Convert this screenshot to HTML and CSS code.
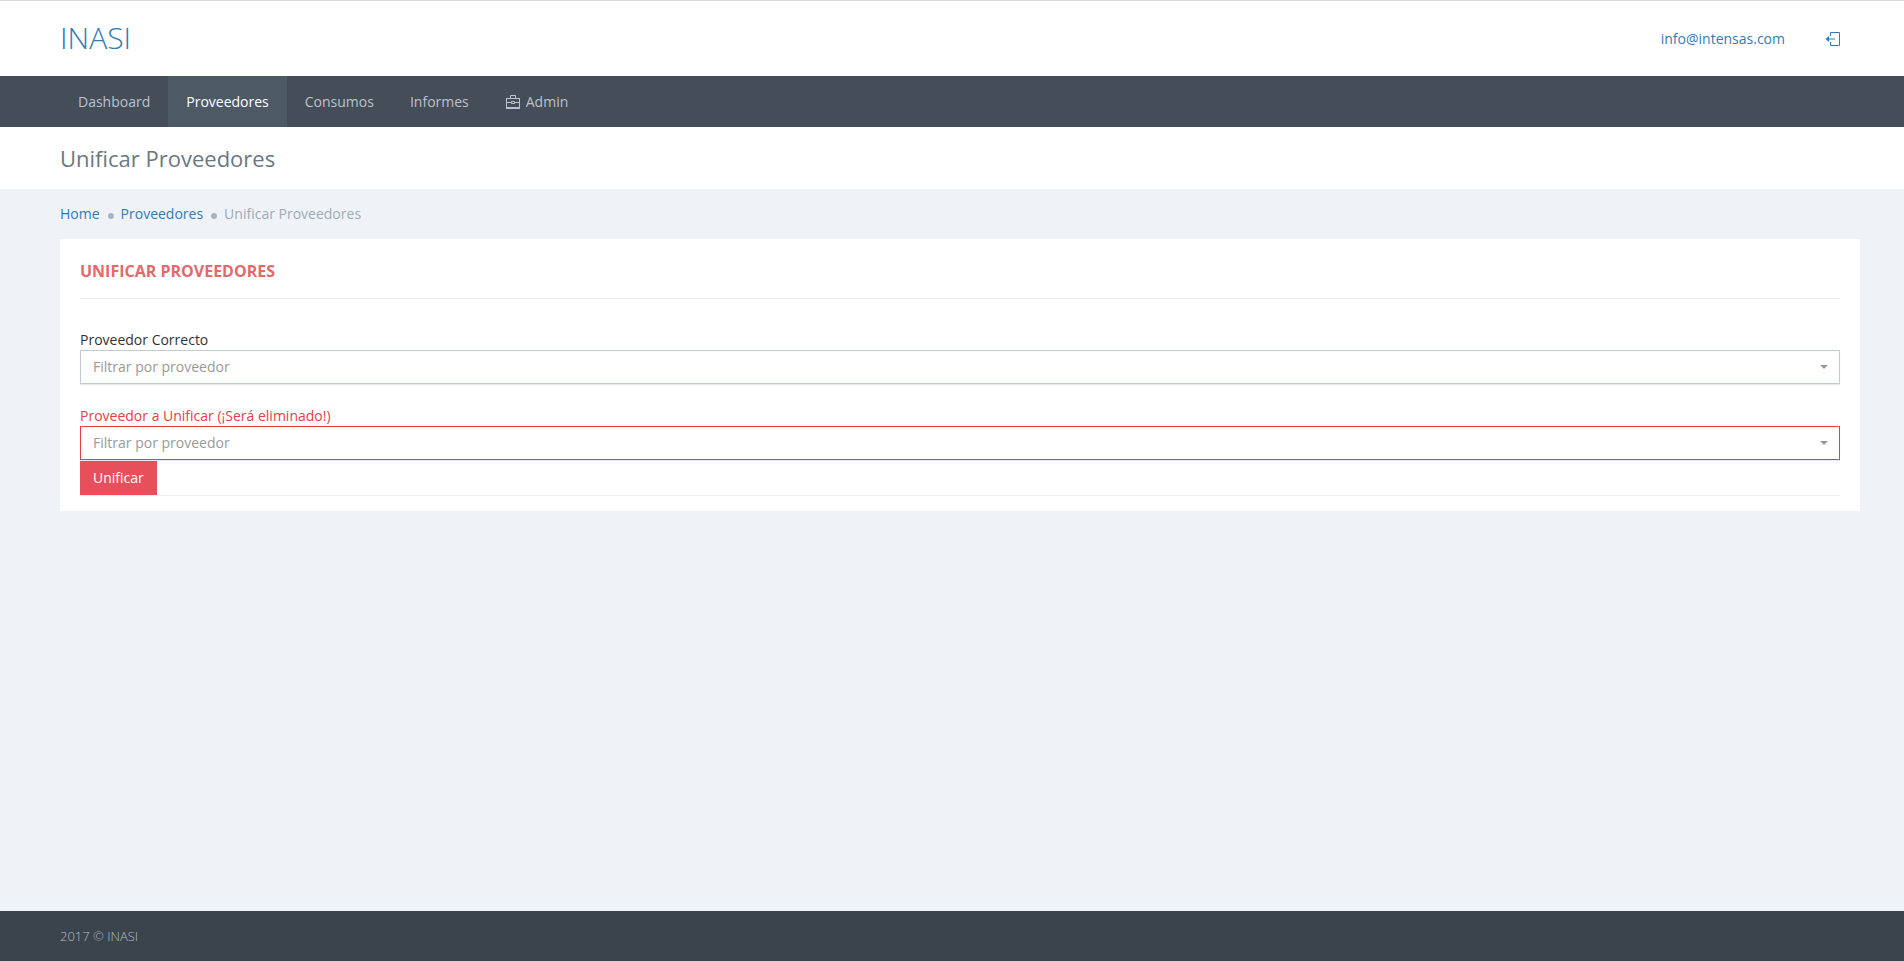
FILE: index.html
```html
<!DOCTYPE html>
<html lang="es">
<head>
<meta charset="utf-8">
<title>Unificar Proveedores</title>
<meta name="viewport" content="width=device-width, initial-scale=1">
<link rel="stylesheet" href="styles.css">
</head>
<body>
<header class="top">
  <a class="logo" href="#">INASI</a>
  <div class="user">
    <a href="#">info@intensas.com</a>
    <a class="logout" href="#" aria-label="Salir">
      <svg width="16" height="16" viewBox="0 0 16 16" fill="none" stroke="currentColor"><path d="M5.500 5V1.500H14.500V14.500H5.500V11M3 8H10"/><path d="M0.500 8L4 5V11Z" fill="currentColor" stroke="none"/></svg>
    </a>
  </div>
</header>
<nav class="menu">
  <a href="#">Dashboard</a>
  <a class="active" href="#">Proveedores</a>
  <a href="#">Consumos</a>
  <a href="#">Informes</a>
  <a href="#"><svg width="16" height="16" viewBox="0 0 16 16" fill="none" stroke="currentColor"><path d="M1 4.500H15M1.500 4V14M14.500 4V14M5.500 4.500V1.500H10.500V4.500M1.500 8.500H6.500M9.500 8.500H14.500M6.500 7.500H9.500V9.500H6.500Z"/><path d="M1 14H15" stroke-width="2"/></svg>Admin</a>
</nav>
<div class="page-head"><h1>Unificar Proveedores</h1></div>
<main class="content">
  <ol class="crumbs">
    <li><a href="#">Home</a></li>
    <li><a href="#">Proveedores</a></li>
    <li>Unificar Proveedores</li>
  </ol>
  <section class="card">
    <h2>Unificar Proveedores</h2>
    <form>
      <div class="field">
        <label for="correcto">Proveedor Correcto</label>
        <div class="picker"><select id="correcto"><option>Filtrar por proveedor</option></select></div>
      </div>
      <div class="field error">
        <label for="unificar">Proveedor a Unificar (¡Será eliminado!)</label>
        <div class="picker"><select id="unificar"><option>Filtrar por proveedor</option></select></div>
      </div>
      <div class="actions"><button type="button">Unificar</button></div>
    </form>
  </section>
</main>
<footer class="footer">2017 © INASI</footer>
</body>
</html>
```
FILE: styles.css
```css
* { box-sizing: border-box; }
body {
  margin: 0;
  min-height: 100vh;
  display: flex;
  flex-direction: column;
  background: #eff3f8;
  color: #333;
  font: 400 14px/20px "Open Sans", sans-serif;
}
a { color: #337ab7; text-decoration: none; }
h1, h2, ol { margin: 0; padding: 0; }

.top {
  display: flex;
  align-items: center;
  justify-content: space-between;
  height: 76px;
  padding: 0 63px 0 60px;
  background: #fff;
  border-top: 1px solid #d9d9d9;
}
.logo { padding-bottom: 2px; font-size: 30px; line-height: 40px; font-weight: 300; }
.user { display: flex; align-items: center; gap: 40px; }
.logout { display: flex; }

.menu {
  display: flex;
  padding: 0 44px 0 60px;
  background: #444d58;
}
.menu a {
  display: flex;
  align-items: center;
  gap: 5px;
  height: 51px;
  padding: 0 18px;
  color: #bcc2cb;
}
.menu .active { background: #4e5966; color: #fff; }

.page-head { padding: 16px 60px; background: #fff; }
.page-head h1 { color: #697882; font-size: 22px; line-height: 30px; font-weight: 400; }

.content { flex: 1; padding: 15px 44px 15px 60px; }
.crumbs { display: flex; list-style: none; color: #9eacb4; margin-bottom: 15px; }
.crumbs li { display: flex; align-items: center; }
.crumbs li + li::before {
  content: "";
  width: 6px;
  height: 6px;
  margin: 4px 7px 0 8px;
  border-radius: 50%;
  background: #a7b5c5;
}

.card { padding: 12px 20px 15px; background: #fff; }
.card h2 {
  height: 48px;
  padding: 10px 0;
  border-bottom: 1px solid #eee;
  color: #e26a6a;
  font-size: 16px;
  line-height: 20px;
  font-weight: 700;
  text-transform: uppercase;
}
.card form { padding-top: 31px; }
.field + .field { margin-top: 22px; }
.field label { display: block; }
.picker { position: relative; }
.picker::after {
  content: "";
  position: absolute;
  right: 12px;
  top: 15px;
  border: 4px solid transparent;
  border-top-color: #999;
  border-bottom: 0;
  pointer-events: none;
}
.picker select {
  display: block;
  width: 100%;
  height: 34px;
  padding: 0 12px;
  appearance: none;
  background: #fff;
  border: 1px solid #c2cad8;
  border-radius: 0;
  box-shadow: 0 1px 1px rgba(0, 0, 0, .08);
  color: #999;
  font: inherit;
}
.error label { color: #e73d4a; }
.error select { border-color: #e73d4a; }
.actions { display: flex; padding-top: 1px; border-bottom: 1px solid #eee; }
.actions button {
  height: 34px;
  padding: 0 13px;
  border: 0;
  background: #e7505a;
  color: #fff;
  font: inherit;
}

.footer {
  padding: 15px 60px;
  background: #3b434c;
  color: #b4bcc8;
  font-size: 13px;
  font-weight: 300;
}
```
